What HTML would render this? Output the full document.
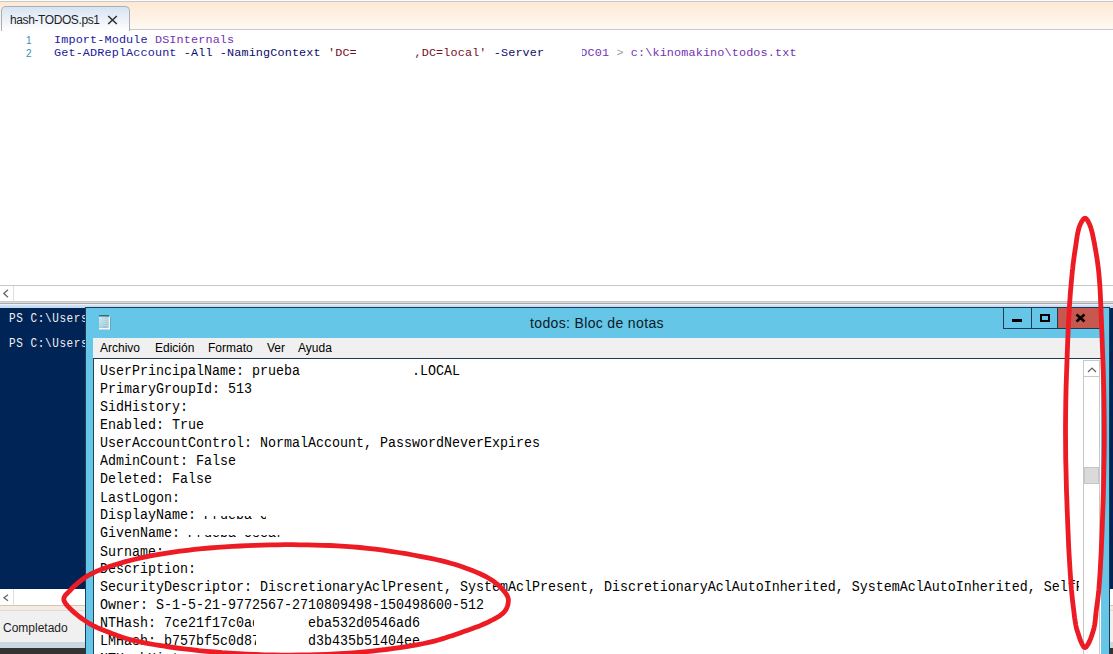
<!DOCTYPE html>
<html><head><meta charset="utf-8">
<style>
*{margin:0;padding:0;box-sizing:border-box}
html,body{width:1113px;height:654px;overflow:hidden;background:#fff;position:relative}
body{font-family:"Liberation Sans",sans-serif}
.a{position:absolute}
.mono{font-family:"Liberation Mono",monospace;white-space:pre}
</style></head><body>
<!-- tab strip -->
<div class="a" style="left:0;top:0;width:1113px;height:1px;background:#fbfbfb"></div>
<div class="a" style="left:0;top:1px;width:1113px;height:1px;background:#c8c8c8"></div>
<div class="a" style="left:0;top:2px;width:1113px;height:27px;background:linear-gradient(#fde9d4,#fff9f2)"></div>
<div class="a" style="left:129px;top:29px;width:984px;height:1px;background:#c8c8c8"></div>
<div class="a" style="left:1px;top:6px;width:129px;height:25px;border:1px solid #a9afb8;border-bottom:none;border-radius:5px 5px 0 0;background:linear-gradient(#d7e3f3,#ffffff)"></div>
<div class="a" style="left:10px;top:13px;font-size:12px;color:#1e1e1e;letter-spacing:-0.4px">hash-TODOS.ps1</div>
<svg class="a" style="left:107px;top:15px" width="11" height="10"><path d="M1.2 1L9.8 9M9.8 1L1.2 9" stroke="#333" stroke-width="1.6"/></svg>

<!-- editor -->
<div class="a mono" style="left:26px;top:34px;font-family:'Liberation Sans';font-size:10px;color:#3a8fab;line-height:13px">1
2</div>
<div class="a mono" style="left:54px;top:34px;font-size:11.8px;letter-spacing:0.13px;line-height:13px;color:#0c0c6a"><span style="color:#1a1a9c">Import-Module</span> <span style="color:#7432b4">DSInternals</span>
<span style="color:#1a1a9c">Get-ADReplAccount</span> -All -NamingContext <span style="color:#74101e">'DC=        ,DC=local'</span> -Server     <span style="color:#7432b4">DC01</span> <span style="color:#9a9a9a">&gt;</span> <span style="color:#7432b4">c:\kinomakino\todos.txt</span></div>

<div class="a" style="left:357px;top:44px;width:58px;height:14px;background:#fff"></div>
<div class="a" style="left:545px;top:44px;width:37px;height:14px;background:#fff"></div>
<!-- editor h scrollbar -->
<div class="a" style="left:0;top:285px;width:1113px;height:17px;background:#fff;border-top:1px solid #c8c8c8;border-bottom:1px solid #c8c8c8"></div>
<div class="a" style="left:13px;top:286px;width:1px;height:15px;background:#e0e0e0"></div>
<svg class="a" style="left:2px;top:289px" width="8" height="9"><path d="M6 0.8L1.8 4.5L6 8.2" fill="none" stroke="#666" stroke-width="1.3"/></svg>
<!-- splitter -->
<div class="a" style="left:0;top:302px;width:1113px;height:1px;background:#d9d9d9"></div><div class="a" style="left:0;top:303px;width:1113px;height:1px;background:#acacac"></div><div class="a" style="left:0;top:304px;width:1113px;height:1px;background:#e9f0f9"></div><div class="a" style="left:0;top:305px;width:1113px;height:3px;background:linear-gradient(#d3e3f6,#c2d6f0)"></div>

<!-- console -->
<div class="a" style="left:0;top:308px;width:1113px;height:281px;background:#012456"></div>
<div class="a mono" style="left:9px;top:306px;font-size:11px;letter-spacing:0.6px;line-height:23.214px;color:#f2f2f4;transform:scaleY(1.12);transform-origin:0 0">PS C:\Users
PS C:\Users</div>

<!-- bottom left -->
<div class="a" style="left:0;top:589px;width:1113px;height:16px;background:#fff"></div>
<div class="a" style="left:13px;top:589px;width:1px;height:16px;background:#e0e0e0"></div>
<svg class="a" style="left:2px;top:594px" width="8" height="8"><path d="M6 0.8L2 3.8L6 6.8" fill="none" stroke="#666" stroke-width="1.3"/></svg>
<div class="a" style="left:0;top:605px;width:1113px;height:1px;background:#cfc8c0"></div><div class="a" style="left:0;top:606px;width:1113px;height:4px;background:#f6ebdf"></div><div class="a" style="left:0;top:610px;width:1113px;height:1px;background:#dcdcdc"></div>
<div class="a" style="left:0;top:611px;width:1113px;height:31px;background:#f0f0f0"></div>
<div class="a" style="left:3px;top:621px;font-size:12px;color:#1e1e1e">Completado</div>
<div class="a" style="left:0;top:642px;width:1113px;height:6px;background:#c9d7df"></div>
<div class="a" style="left:0;top:648px;width:1113px;height:6px;background:#333"></div>

<!-- notepad -->
<div class="a" style="left:85px;top:307px;width:1025px;height:360px;background:#65c6e8;border:1px solid #1f3a55"></div>
<svg class="a" style="left:96px;top:312px" width="18" height="20">
<defs><linearGradient id="ng" x1="0" y1="0" x2="1" y2="1"><stop offset="0" stop-color="#d9eff5"/><stop offset="0.7" stop-color="#96c3d2"/><stop offset="1" stop-color="#b8d6df"/></linearGradient></defs>
<rect x="4" y="5" width="11" height="13" fill="#3a6a80" opacity="0.3"/>
<rect x="3" y="4" width="11" height="13.5" fill="url(#ng)"/>
<path d="M3 16.8H13.3V5" fill="none" stroke="#f2f8f8" stroke-width="1.4"/>
<path d="M4 7.5H12M4 9.5H12M4 11.5H12M4 13.5H12" stroke="#c4e0ea" stroke-width="0.7"/>
<g fill="#1f4558"><rect x="3.3" y="3" width="1.4" height="1.6"/><rect x="5.3" y="3" width="1.4" height="1.6"/><rect x="7.3" y="3" width="1.4" height="1.6"/><rect x="9.3" y="3" width="1.4" height="1.6"/><rect x="11.3" y="3" width="1.4" height="1.6"/></g>
</svg>
<div class="a" style="left:530px;top:315px;font-size:14px;letter-spacing:0.35px;color:#0a1a26">todos: Bloc de notas</div>
<div class="a" style="left:1003px;top:307px;width:29px;height:22px;border:1px solid #1f3a55;background:#65c6e8"></div>
<div class="a" style="left:1012px;top:319px;width:10px;height:3px;background:#000"></div>
<div class="a" style="left:1032px;top:307px;width:26px;height:22px;border:1px solid #1f3a55;border-left:none;background:#65c6e8"></div>
<div class="a" style="left:1040px;top:314px;width:10px;height:8px;border:2px solid #000"></div>
<div class="a" style="left:1058px;top:307px;width:43px;height:22px;border:1px solid #1f3a55;border-left:none;background:#c7584f"></div>
<svg class="a" style="left:1075px;top:313px" width="11" height="10"><path d="M1.5 1.5L9.5 8.5M9.5 1.5L1.5 8.5" stroke="#000" stroke-width="2.6"/></svg>

<div class="a" style="left:93px;top:338px;width:1008px;height:21px;background:#f0f0f0;border-bottom:1px solid #1f3a55"></div>
<div class="a" style="left:100px;top:341px;font-size:12px;color:#000;white-space:pre">Archivo</div>
<div class="a" style="left:155px;top:341px;font-size:12px;color:#000;white-space:pre">Edición</div>
<div class="a" style="left:208px;top:341px;font-size:12px;color:#000;white-space:pre">Formato</div>
<div class="a" style="left:267px;top:341px;font-size:12px;color:#000;white-space:pre">Ver</div>
<div class="a" style="left:298px;top:341px;font-size:12px;color:#000;white-space:pre">Ayuda</div>

<div class="a" style="left:93px;top:359px;width:1008px;height:300px;background:#fff;border-left:1px solid #24435a"></div>
<div class="a mono" id="np" style="left:100px;top:363px;font-size:13.33px;line-height:16.3636px;color:#000;transform:scaleY(1.1);transform-origin:0 0">UserPrincipalName: prueba              .LOCAL
PrimaryGroupId: 513
SidHistory:
Enabled: True
UserAccountControl: NormalAccount, PasswordNeverExpires
AdminCount: False
Deleted: False
LastLogon:
DisplayName: Prueba Oscar
GivenName: Prueba Oscar
Surname:
Description:
SecurityDescriptor: DiscretionaryAclPresent, SystemAclPresent, DiscretionaryAclAutoInherited, SystemAclAutoInherited, SelfR
Owner: S-1-5-21-9772567-2710809498-150498600-512
NTHash: 7ce21f17c0ad     :eba532d0546ad6
LMHash: b757bf5c0d87      d3b435b51404ee
NTHashHistory:</div>
<div class="a" style="left:203px;top:505px;width:120px;height:11px;background:#fff"></div>
<div class="a" style="left:266px;top:505px;width:60px;height:16px;background:#fff"></div>
<div class="a" style="left:187px;top:523px;width:120px;height:12px;background:#fff"></div>
<div class="a" style="left:254px;top:613px;width:51px;height:17px;background:#fff"></div>
<div class="a" style="left:256px;top:631px;width:50px;height:20px;background:#fff"></div>
<div class="a" style="left:1079px;top:578px;width:5px;height:18px;background:#fff"></div>
<!-- notepad scrollbar -->
<div class="a" style="left:1083px;top:360px;width:17px;height:300px;background:#fff;border-left:1px solid #c8c8c8;border-right:1px solid #c8c8c8"></div>
<div class="a" style="left:1083px;top:360px;width:17px;height:17px;border:1px solid #c8c8c8;background:#fff"></div>
<svg class="a" style="left:1087px;top:366px" width="10" height="7"><path d="M1 6L5 2L9 6" fill="none" stroke="#606060" stroke-width="1.2"/></svg>
<div class="a" style="left:1084px;top:467px;width:15px;height:17px;background:#dadada;border:1px solid #c6c6c6"></div>

<!-- red ellipses -->
<svg class="a" style="left:0;top:0" width="1113" height="654">
<path d="M1085.1 218.2 L1085.7 218.4 L1086.3 218.8 L1086.9 219.5 L1087.5 220.4 L1088.1 221.5 L1088.7 222.6 L1089.3 223.8 L1089.8 225.0 L1090.7 227.3 L1091.5 230.1 L1092.3 233.1 L1093.0 236.4 L1093.7 239.9 L1094.4 243.3 L1095.0 246.8 L1095.6 250.0 L1096.1 253.1 L1096.6 256.1 L1097.1 259.0 L1097.5 262.0 L1097.9 265.1 L1098.3 268.2 L1098.7 271.5 L1099.0 275.0 L1099.4 279.9 L1099.8 284.9 L1100.1 290.0 L1100.4 295.4 L1100.6 301.1 L1100.9 307.0 L1101.1 313.3 L1101.4 320.0 L1101.8 331.4 L1102.3 344.1 L1102.8 357.7 L1103.3 372.0 L1103.7 386.6 L1104.0 401.4 L1104.2 415.9 L1104.3 430.0 L1104.3 444.0 L1104.1 458.5 L1103.8 473.1 L1103.5 487.7 L1103.1 501.9 L1102.6 515.5 L1102.2 528.3 L1101.7 540.0 L1101.4 547.3 L1101.1 554.4 L1100.7 561.2 L1100.4 567.6 L1100.0 573.8 L1099.6 579.5 L1099.2 585.0 L1098.8 590.0 L1098.5 592.9 L1098.2 595.6 L1097.9 598.2 L1097.6 600.6 L1097.3 602.9 L1097.0 605.2 L1096.6 607.6 L1096.3 610.0 L1096.0 612.5 L1095.8 615.1 L1095.5 617.6 L1095.3 620.1 L1095.0 622.7 L1094.6 625.2 L1094.1 627.6 L1093.5 630.0 L1092.7 632.5 L1091.8 635.3 L1090.7 638.3 L1089.6 641.1 L1088.4 643.6 L1087.2 645.6 L1086.1 647.0 L1085.0 647.5 L1083.9 647.0 L1082.9 645.6 L1081.8 643.6 L1080.7 641.0 L1079.6 638.2 L1078.7 635.3 L1077.8 632.5 L1077.0 630.0 L1076.3 627.6 L1075.8 625.1 L1075.4 622.7 L1075.0 620.1 L1074.6 617.6 L1074.3 615.1 L1074.0 612.5 L1073.7 610.0 L1073.4 607.6 L1073.1 605.2 L1072.8 602.9 L1072.5 600.6 L1072.3 598.2 L1072.0 595.6 L1071.8 592.9 L1071.5 590.0 L1071.1 585.0 L1070.7 579.5 L1070.3 573.8 L1069.9 567.6 L1069.5 561.2 L1069.1 554.4 L1068.7 547.3 L1068.4 540.0 L1067.9 528.3 L1067.4 515.5 L1066.9 501.9 L1066.4 487.7 L1066.1 473.1 L1065.7 458.5 L1065.6 444.0 L1065.5 430.0 L1065.6 415.9 L1065.8 401.4 L1066.1 386.6 L1066.6 372.0 L1067.1 357.7 L1067.6 344.1 L1068.1 331.4 L1068.7 320.0 L1069.1 313.3 L1069.4 307.0 L1069.8 301.1 L1070.2 295.4 L1070.6 290.0 L1071.1 284.9 L1071.5 279.9 L1072.0 275.0 L1072.3 271.5 L1072.7 268.2 L1073.0 265.1 L1073.4 262.0 L1073.8 259.0 L1074.2 256.1 L1074.6 253.1 L1075.1 250.0 L1075.6 246.8 L1076.1 243.3 L1076.6 239.9 L1077.1 236.4 L1077.7 233.1 L1078.4 230.1 L1079.1 227.3 L1080.0 225.0 L1080.6 223.8 L1081.2 222.6 L1081.8 221.4 L1082.5 220.4 L1083.1 219.5 L1083.8 218.8 L1084.5 218.4Z" fill="none" stroke="#ec1b24" stroke-width="4.8" stroke-linejoin="round"/>
<path d="M63.8 599.0 L64.0 597.9 L64.4 596.9 L65.0 595.8 L65.8 594.8 L66.8 593.8 L67.8 592.7 L68.9 591.6 L70.0 590.5 L71.8 588.6 L73.9 586.6 L76.2 584.5 L78.6 582.4 L81.2 580.3 L84.0 578.3 L86.9 576.3 L90.0 574.5 L94.2 572.4 L98.7 570.4 L103.6 568.5 L108.7 566.7 L113.9 565.0 L119.2 563.5 L124.6 561.9 L130.0 560.5 L135.9 559.0 L141.9 557.6 L148.1 556.4 L154.3 555.2 L160.6 554.1 L167.0 553.1 L173.5 552.1 L180.0 551.2 L187.2 550.3 L194.6 549.4 L202.1 548.7 L209.6 548.0 L217.2 547.4 L224.9 546.9 L232.5 546.4 L240.0 546.0 L247.5 545.6 L255.0 545.3 L262.5 545.1 L270.0 544.9 L277.5 544.8 L285.0 544.7 L292.5 544.7 L300.0 544.8 L307.5 544.9 L315.0 545.1 L322.5 545.3 L330.0 545.5 L337.5 545.9 L345.0 546.3 L352.5 546.8 L360.0 547.5 L367.6 548.3 L375.3 549.2 L383.1 550.2 L390.8 551.3 L398.4 552.5 L405.9 553.7 L413.1 555.0 L420.0 556.3 L425.5 557.4 L430.8 558.4 L435.9 559.5 L441.0 560.7 L445.9 561.9 L450.7 563.2 L455.4 564.5 L460.0 566.0 L464.1 567.4 L468.2 568.9 L472.3 570.5 L476.2 572.1 L480.0 573.8 L483.6 575.5 L487.0 577.2 L490.0 579.0 L492.0 580.3 L493.9 581.6 L495.7 583.0 L497.4 584.4 L499.0 585.8 L500.4 587.2 L501.8 588.6 L503.0 590.0 L503.9 591.1 L504.8 592.2 L505.7 593.3 L506.4 594.4 L507.1 595.5 L507.6 596.6 L508.0 597.8 L508.3 599.0 L508.4 600.4 L508.3 601.9 L508.1 603.5 L507.8 605.1 L507.3 606.6 L506.6 608.2 L505.9 609.6 L505.0 611.0 L503.7 612.5 L502.2 613.9 L500.5 615.2 L498.7 616.5 L496.6 617.7 L494.5 618.8 L492.3 620.0 L490.0 621.2 L486.8 622.8 L483.3 624.3 L479.6 625.9 L475.7 627.3 L471.8 628.8 L467.8 630.2 L463.8 631.6 L460.0 632.9 L456.3 634.2 L452.8 635.4 L449.3 636.6 L445.7 637.8 L442.1 638.9 L438.3 640.0 L434.3 641.1 L430.0 642.1 L423.6 643.5 L416.6 644.8 L409.3 646.1 L401.6 647.3 L393.8 648.4 L385.8 649.5 L377.9 650.4 L370.0 651.3 L361.5 652.1 L352.9 652.8 L344.2 653.4 L335.4 653.9 L326.5 654.3 L317.6 654.6 L308.8 654.8 L300.0 655.0 L291.2 655.1 L282.4 655.1 L273.5 655.0 L264.7 654.8 L255.8 654.5 L247.1 654.1 L238.5 653.7 L230.0 653.2 L222.2 652.7 L214.4 652.0 L206.6 651.3 L198.9 650.6 L191.4 649.7 L184.0 648.9 L176.9 648.0 L170.0 647.0 L164.5 646.2 L159.1 645.4 L153.8 644.5 L148.6 643.6 L143.6 642.7 L138.8 641.7 L134.3 640.7 L130.0 639.6 L127.1 638.8 L124.5 638.0 L121.9 637.2 L119.5 636.3 L117.2 635.5 L114.8 634.6 L112.4 633.7 L110.0 632.7 L107.5 631.7 L104.9 630.8 L102.4 629.8 L99.9 628.7 L97.4 627.7 L94.9 626.5 L92.4 625.3 L90.0 623.9 L87.3 622.3 L84.6 620.4 L81.8 618.5 L79.1 616.5 L76.5 614.4 L74.1 612.4 L71.9 610.4 L70.0 608.5 L68.9 607.3 L67.7 606.1 L66.7 604.9 L65.7 603.7 L64.9 602.5 L64.3 601.3 L63.9 600.2Z" fill="none" stroke="#ec1b24" stroke-width="4.8" stroke-linejoin="round"/>
</svg>
</body></html>
